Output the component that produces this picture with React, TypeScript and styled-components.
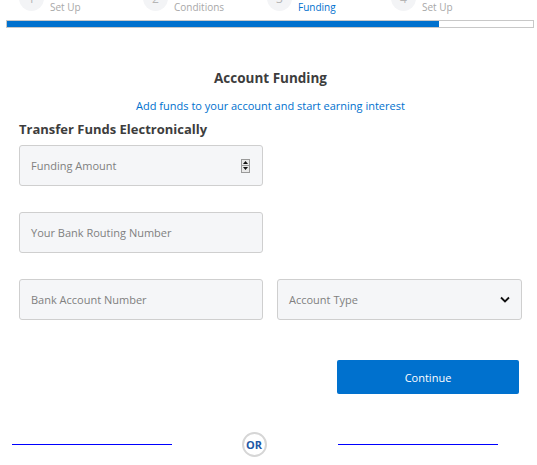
import React from "react";
import styled, { createGlobalStyle } from "styled-components";

const Global = createGlobalStyle`
  html, body { margin: 0; padding: 0; background: #fff; overflow: hidden; }
  body { font-family: "Open Sans", "Liberation Sans", Arial, sans-serif; }
  * { box-sizing: border-box; }
`;

const Page = styled.div`
  width: 537px;
  height: 465px;
  overflow: hidden;
  padding: 0 3px 0 6px;
`;

const Stepper = styled.div`
  display: flex;
  margin-top: -14px;
  padding-left: 13px;
`;

const Step = styled.div`
  width: 124px;
  display: flex;
  align-items: flex-start;
  gap: 6px;
`;

const StepCircle = styled.div`
  width: 25px;
  height: 25px;
  border-radius: 50%;
  background: #f3f4f6;
  color: #b5b5b5;
  font-size: 12px;
  display: flex;
  align-items: center;
  justify-content: center;
  flex: none;
`;

const StepLabel = styled.div<{ $active?: boolean }>`
  font-size: 10px;
  line-height: 14px;
  color: ${(p) => (p.$active ? "#0071ce" : "#a8a8a8")};
  white-space: pre-line;
`;

const Bar = styled.div`
  margin-top: 6px;
  height: 8px;
  border: 1px solid #c8c8c8;
  background: #fff;
  width: 528px;
`;

const BarFill = styled.div`
  height: 100%;
  background: #0071ce;
`;

const Content = styled.div`
  padding: 0 12px 0 13px;
`;

const Title = styled.h2`
  margin: 41px 0 0;
  text-align: center;
  font-size: 13.5px;
  font-weight: 700;
  color: #3d3d3d;
  line-height: 18px;
`;

const Subtitle = styled.p`
  margin: 12px 0 0;
  text-align: center;
  font-size: 11px;
  color: #0071ce;
  line-height: 14px;
`;

const Section = styled.h3`
  margin: 7px 0 0;
  font-size: 13px;
  font-weight: 700;
  color: #3d3d3d;
  line-height: 18px;
`;

const Form = styled.div`
  margin-top: 7px;
  display: grid;
  grid-template-columns: 244px 245px;
  column-gap: 14px;
  row-gap: 26px;
`;

const Field = styled.div`
  height: 41px;
  border: 1px solid #cfcfcf;
  border-radius: 3px;
  background: #f5f6f8;
  display: flex;
  align-items: center;
  padding: 0 11px;
  font-size: 11px;
  color: #808080;
`;

const FieldText = styled.span`
  flex: 1;
  margin-top: -1px;
`;

const Spinner = styled.div`
  width: 9px;
  height: 14px;
  border: 1px solid #9a9a9a;
  background: #e9e9e9;
  display: flex;
  flex-direction: column;
  margin-right: 1px;
`;

const SpinHalf = styled.div`
  flex: 1;
  display: flex;
  align-items: center;
  justify-content: center;
  & + & { border-top: 1px solid #9a9a9a; }
`;

const Actions = styled.div`
  display: flex;
  justify-content: flex-end;
  margin-top: 40px;
  padding-right: 3px;
`;

const Button = styled.button`
  width: 182px;
  height: 34px;
  border: none;
  border-radius: 2px;
  background: #0071ce;
  color: #fff;
  font-family: inherit;
  font-size: 11px;
`;

const OrRow = styled.div`
  margin-top: 38px;
  display: grid;
  grid-template-columns: 160px 166px 160px;
  align-items: center;
  margin-left: 6px;
`;

const Line = styled.div`
  height: 1px;
  background: #0000ff;
`;

const OrWrap = styled.div`
  display: flex;
  justify-content: center;
  padding-right: 2px;
`;

const OrBadge = styled.div`
  width: 25px;
  height: 25px;
  border-radius: 50%;
  border: 2px solid #d6d6d6;
  display: flex;
  align-items: center;
  justify-content: center;
  font-size: 11px;
  font-weight: 700;
  color: #1d58a6;
  background: #fff;
`;

const steps = [
  { n: 1, label: "Account\nSet Up" },
  { n: 2, label: "Terms &\nConditions" },
  { n: 3, label: "Account\nFunding", active: true },
  { n: 4, label: "Online Banking\nSet Up" },
];

export default function App() {
  return (
    <Page>
      <Global />
      <Stepper>
        {steps.map((s) => (
          <Step key={s.n}>
            <StepCircle>{s.n}</StepCircle>
            <StepLabel $active={s.active}>{s.label}</StepLabel>
          </Step>
        ))}
      </Stepper>
      <Bar>
        <BarFill style={{ width: `${(432 / 526) * 100}%` }} />
      </Bar>
      <Content>
        <Title>Account Funding</Title>
        <Subtitle>Add funds to your account and start earning interest</Subtitle>
        <Section>Transfer Funds Electronically</Section>
        <Form>
          <Field>
            <FieldText>Funding Amount</FieldText>
            <Spinner>
              <SpinHalf>
                <svg width="5" height="3" viewBox="0 0 5 3"><path d="M0 3L2.5 0L5 3Z" fill="#111" /></svg>
              </SpinHalf>
              <SpinHalf>
                <svg width="5" height="3" viewBox="0 0 5 3"><path d="M0 0L2.5 3L5 0Z" fill="#111" /></svg>
              </SpinHalf>
            </Spinner>
          </Field>
          <div />
          <Field>
            <FieldText>Your Bank Routing Number</FieldText>
          </Field>
          <div />
          <Field>
            <FieldText>Bank Account Number</FieldText>
          </Field>
          <Field>
            <FieldText>Account Type</FieldText>
            <svg width="10" height="7" viewBox="0 0 10 7">
              <path d="M1 1.5L5 5.5L9 1.5" stroke="#111" strokeWidth="1.8" fill="none" />
            </svg>
          </Field>
        </Form>
        <Actions>
          <Button>Continue</Button>
        </Actions>
      </Content>
      <OrRow>
        <Line />
        <OrWrap>
          <OrBadge>OR</OrBadge>
        </OrWrap>
        <Line />
      </OrRow>
    </Page>
  );
}
